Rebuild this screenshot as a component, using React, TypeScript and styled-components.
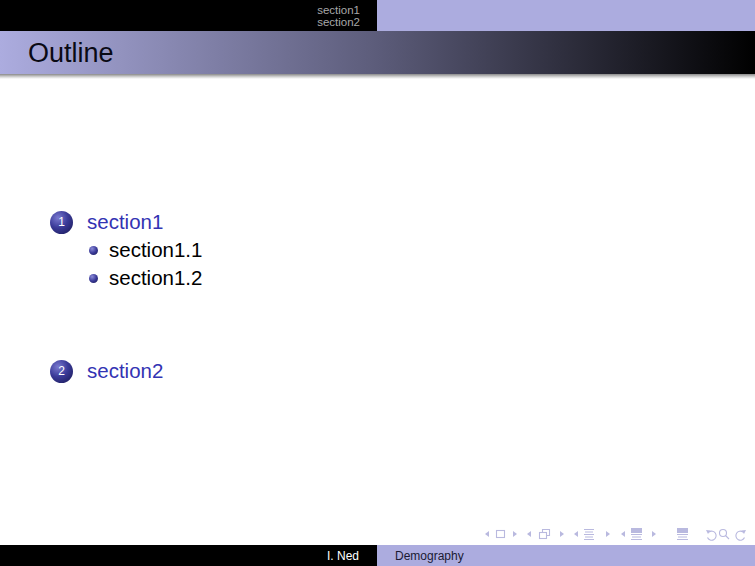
import React from "react";
import styled, { createGlobalStyle } from "styled-components";

const Global = createGlobalStyle`
  html, body { margin: 0; padding: 0; background: #fff; }
  body { font-family: "Liberation Sans", Arial, sans-serif; }
`;

const lavender = "#acacdf";
const structure = "#3333b3";
const navColor = "#b9b9df";

const Slide = styled.div`
  width: 755px;
  height: 566px;
  display: flex;
  flex-direction: column;
  overflow: hidden;
  background: #fff;
`;

const HeadLine = styled.div`
  display: flex;
  height: 31px;
`;

const HalfBox = styled.div<{ $dark?: boolean; $align?: string }>`
  flex: 0 0 ${(p) => (p.$dark ? "377px" : "auto")};
  flex-grow: ${(p) => (p.$dark ? 0 : 1)};
  background: ${(p) => (p.$dark ? "#000" : lavender)};
  display: flex;
  flex-direction: column;
  justify-content: center;
  align-items: ${(p) => p.$align || "flex-start"};
  box-sizing: border-box;
`;

const MiniSection = styled.div`
  color: #a8a8a8;
  font-size: 11.5px;
  line-height: 12px;
  padding-right: 17px;
`;

const TitleBar = styled.div`
  height: 43px;
  background: linear-gradient(to right, ${lavender} 0%, #5c5c7a 50%, #000 100%);
  display: flex;
  align-items: center;
  padding-left: 28px;
`;

const FrameTitle = styled.h1`
  margin: 0;
  font-weight: normal;
  font-size: 27px;
  color: #0a0a14;
  padding-top: 2px;
`;

const TitleShadow = styled.div`
  height: 5px;
  background: linear-gradient(to bottom, #8a8a8a, #d8d8d8 60%, #fff);
`;

const Body = styled.div`
  flex: 1;
  display: flex;
  flex-direction: column;
  padding: 129px 0 0 50px;
`;

const SectionRow = styled.div<{ $gap?: number }>`
  display: flex;
  align-items: center;
  height: 28px;
  margin-top: ${(p) => p.$gap || 0}px;
`;

const Ball = styled.span`
  width: 23px;
  height: 23px;
  border-radius: 50%;
  background: radial-gradient(circle at 35% 30%, #7a7ad0 0%, #3a3a98 45%, #161650 100%);
  color: #fff;
  font-size: 12px;
  display: flex;
  align-items: center;
  justify-content: center;
  margin-right: 14px;
`;

const SectionName = styled.span`
  color: ${structure};
  font-size: 20.5px;
`;

const SubRow = styled.div`
  display: flex;
  align-items: center;
  height: 28px;
  padding-left: 39px;
`;

const SmallBall = styled.span`
  width: 9px;
  height: 9px;
  border-radius: 50%;
  background: radial-gradient(circle at 35% 30%, #8a8ad8 0%, #3a3a98 50%, #161650 100%);
  margin-right: 11px;
`;

const SubName = styled.span`
  color: #000;
  font-size: 20.5px;
`;

const NavLine = styled.div`
  height: 22px;
  display: flex;
  align-items: center;
  justify-content: flex-end;
  padding-right: 4px;
`;

const FootLine = styled.div`
  height: 21px;
  display: flex;
`;

const FootText = styled.span<{ $dark?: boolean }>`
  font-size: 12px;
  color: ${(p) => (p.$dark ? "#fff" : "#1a1a33")};
  padding: ${(p) => (p.$dark ? "0 18px 0 0" : "0 0 0 18px")};
`;

const NavIcons = () => (
  <svg width="268" height="16" viewBox="0 0 268 16" fill="none" stroke={navColor} strokeWidth="1.1">
    {/* frame */}
    <polygon points="6,5 2,8 6,11" fill={navColor} stroke="none" />
    <rect x="13.5" y="4.5" width="8" height="7" />
    <polygon points="30,5 34,8 30,11" fill={navColor} stroke="none" />
    {/* frame stack */}
    <polygon points="48,5 44,8 48,11" fill={navColor} stroke="none" />
    <rect x="56.5" y="6.5" width="7" height="6" />
    <path d="M59.5 6.5 V3.5 H66.5 V9.5 H63.5" />
    <polygon points="77,5 81,8 77,11" fill={navColor} stroke="none" />
    {/* subsection */}
    <polygon points="95,5 91,8 95,11" fill={navColor} stroke="none" />
    <path d="M101 3.5 H111 M102 6 H110 M101 8.5 H111 M102 11 H110 M101 13.5 H111" />
    <polygon points="123,5 127,8 123,11" fill={navColor} stroke="none" />
    {/* section */}
    <polygon points="142,5 138,8 142,11" fill={navColor} stroke="none" />
    <rect x="148" y="2" width="11" height="5" fill={navColor} stroke="none" />
    <path d="M148 8.5 H159 M149 11 H158 M148 13.5 H159" />
    <polygon points="169,5 173,8 169,11" fill={navColor} stroke="none" />
    {/* appendix */}
    <rect x="194" y="2" width="11" height="5" fill={navColor} stroke="none" />
    <path d="M194 8.5 H205 M195 11 H204 M194 13.5 H205" />
    {/* back / search / forward */}
    <path d="M226 6 A4.5 4.5 0 1 1 224.5 11.5" />
    <polygon points="223,4 227.5,4.5 225,8" fill={navColor} stroke="none" />
    <circle cx="240" cy="7" r="3.5" />
    <path d="M242.5 9.5 L246 13" />
    <path d="M260 6 A4.5 4.5 0 1 0 261.5 11.5" />
    <polygon points="263,4 258.5,4.5 261,8" fill={navColor} stroke="none" />
  </svg>
);

export default function App() {
  return (
    <>
      <Global />
      <Slide>
        <HeadLine>
          <HalfBox $dark $align="flex-end">
            <MiniSection>section1</MiniSection>
            <MiniSection>section2</MiniSection>
          </HalfBox>
          <HalfBox />
        </HeadLine>
        <TitleBar>
          <FrameTitle>Outline</FrameTitle>
        </TitleBar>
        <TitleShadow />
        <Body>
          <SectionRow>
            <Ball>1</Ball>
            <SectionName>section1</SectionName>
          </SectionRow>
          <SubRow>
            <SmallBall />
            <SubName>section1.1</SubName>
          </SubRow>
          <SubRow>
            <SmallBall />
            <SubName>section1.2</SubName>
          </SubRow>
          <SectionRow $gap={65}>
            <Ball>2</Ball>
            <SectionName>section2</SectionName>
          </SectionRow>
        </Body>
        <NavLine>
          <NavIcons />
        </NavLine>
        <FootLine>
          <HalfBox $dark $align="flex-end">
            <FootText $dark>I. Ned</FootText>
          </HalfBox>
          <HalfBox>
            <FootText>Demography</FootText>
          </HalfBox>
        </FootLine>
      </Slide>
    </>
  );
}
